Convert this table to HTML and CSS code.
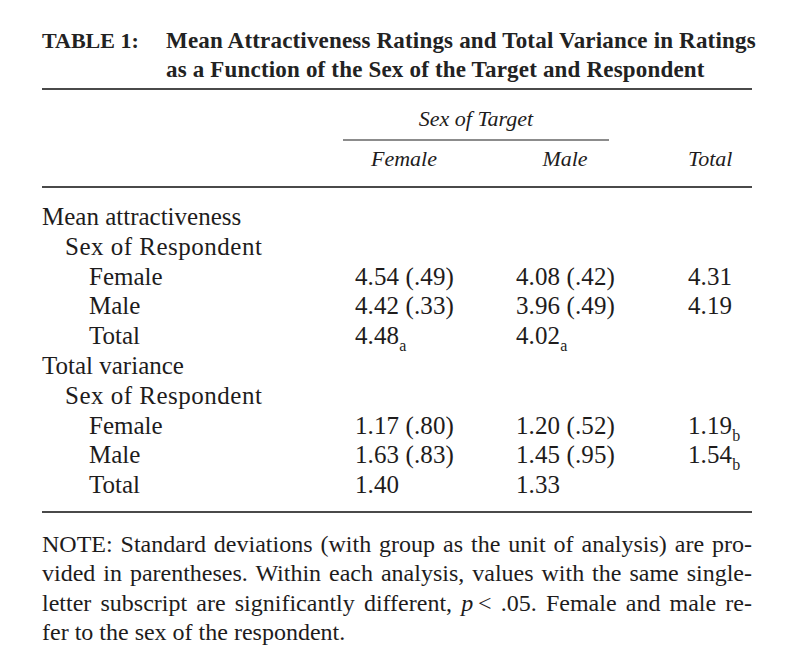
FILE: index.html
```html
<!DOCTYPE html>
<html lang="en">
<head>
<meta charset="utf-8">
<title>Table 1</title>
<link rel="stylesheet" href="styles.css">
</head>
<body>
<div class="page">
  <div class="caption">
    <div class="cap-label">TABLE 1:</div>
    <div class="cap-text">
      <span class="cap-line">Mean Attractiveness Ratings and Total Variance in Ratings</span>
      <span class="cap-line">as a Function of the Sex of the Target and Respondent</span>
    </div>
  </div>

  <div class="head">
    <div class="spanner">Sex of Target</div>
    <div class="grid colheads">
      <div></div>
      <div><span class="ch ch-wide">Female</span></div>
      <div><span class="ch ch-wide">Male</span></div>
      <div><span class="ch ch-narrow">Total</span></div>
    </div>
  </div>

  <div class="body grid">
    <div class="full lv0">Mean attractiveness</div>
    <div class="full lv1">Sex of Respondent</div>

    <div class="lv2">Female</div>
    <div class="num">4.54 (.49)</div>
    <div class="num">4.08 (.42)</div>
    <div class="num">4.31</div>

    <div class="lv2">Male</div>
    <div class="num">4.42 (.33)</div>
    <div class="num">3.96 (.49)</div>
    <div class="num">4.19</div>

    <div class="lv2">Total</div>
    <div class="num">4.48<sub class="sub">a</sub></div>
    <div class="num">4.02<sub class="sub">a</sub></div>
    <div></div>

    <div class="full lv0">Total variance</div>
    <div class="full lv1">Sex of Respondent</div>

    <div class="lv2">Female</div>
    <div class="num">1.17 (.80)</div>
    <div class="num">1.20 (.52)</div>
    <div class="num">1.19<sub class="sub">b</sub></div>

    <div class="lv2">Male</div>
    <div class="num">1.63 (.83)</div>
    <div class="num">1.45 (.95)</div>
    <div class="num">1.54<sub class="sub">b</sub></div>

    <div class="lv2">Total</div>
    <div class="num">1.40</div>
    <div class="num">1.33</div>
    <div></div>
  </div>

  <p class="note">
    <span class="nl">NOTE: Standard deviations (with group as the unit of analysis) are pro-</span>
    <span class="nl">vided in parentheses. Within each analysis, values with the same single-</span>
    <span class="nl">letter subscript are significantly different, <i>p</i>&thinsp;&lt; .05. Female and male re-</span>
    <span class="nl last">fer to the sex of the respondent.</span>
  </p>
</div>
</body>
</html>
```

FILE: styles.css
```css
html, body {
  margin: 0;
  padding: 0;
  background: #ffffff;
}

body {
  font-family: "Liberation Serif", "Times New Roman", serif;
  color: #1e1c1c;
}

.page {
  width: 710px;
  margin-left: 42px;
}

/* Caption */
.caption {
  display: grid;
  grid-template-columns: 124px 1fr;
  padding-top: 26px;
  font-weight: bold;
  font-size: 23px;
  line-height: 29px;
  letter-spacing: 0.18px;
  color: #222;
}

.cap-label {
  font-size: 22px;
  letter-spacing: 0;
}

.cap-line {
  display: block;
  white-space: nowrap;
}

/* Column heads */
.head {
  margin-top: 4px;
  border-top: 2px solid #4a4a4a;
  border-bottom: 2px solid #4a4a4a;
  padding: 14px 0 12px;
  font-style: italic;
  font-size: 22px;
  line-height: 30px;
}

.spanner {
  margin-left: 301px;
  width: 266px;
  text-align: center;
  padding-bottom: 5px;
  border-bottom: 2px solid #8c8c8c;
}

.grid {
  display: grid;
  grid-template-columns: 313px 161px 172px 64px;
}

.colheads {
  margin-top: 3px;
}

.ch {
  display: inline-block;
  text-align: center;
}

.ch-wide {
  width: 98px;
}

.ch-narrow {
  width: 44px;
}

/* Body */
.body {
  grid-auto-rows: 29.8px;
  padding: 14px 0 11px;
  border-bottom: 2px solid #4a4a4a;
  font-size: 25px;
  line-height: 29.8px;
}

.full {
  grid-column: 1 / -1;
}

.lv0 {
  padding-left: 0;
}

.lv1 {
  padding-left: 23px;
  letter-spacing: 0.5px;
}

.lv2 {
  padding-left: 47px;
}

.num {
  letter-spacing: 0.1px;
  white-space: nowrap;
}

.sub {
  font-size: 16px;
  line-height: 0;
  vertical-align: -7px;
  letter-spacing: 0;
}

/* Note */
.note {
  margin: 17px 0 0;
  font-size: 24px;
  line-height: 29.5px;
}

.nl {
  display: block;
  text-align: justify;
  text-align-last: justify;
}

.nl.last {
  text-align-last: left;
}
```
